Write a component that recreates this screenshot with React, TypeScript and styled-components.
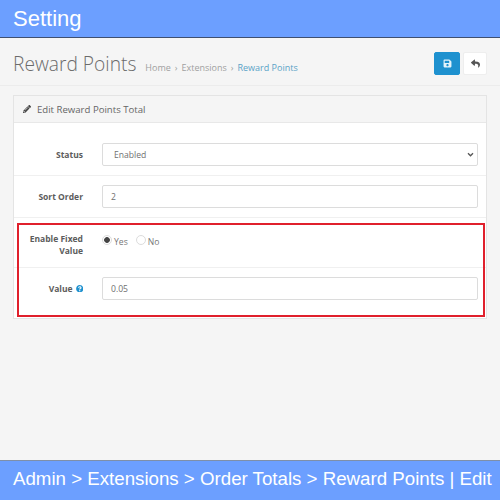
import styled, { createGlobalStyle } from "styled-components";
import { FaPencilAlt, FaQuestionCircle, FaReply, FaSave } from "react-icons/fa";

const GlobalStyle = createGlobalStyle`
  html, body {
    margin: 0;
    padding: 0;
    background: #f5f5f5;
  }
  * {
    box-sizing: border-box;
  }
`;

const Page = styled.div`
  width: 500px;
  height: 500px;
  display: flex;
  flex-direction: column;
  background: #f5f5f5;
  font-family: "Open Sans", "Liberation Sans", sans-serif;
  font-size: 10px;
  color: #666;
  overflow: hidden;
`;

const Banner = styled.div<{ $bottom?: boolean }>`
  background: #6c9fff;
  color: #fff;
  font-family: "Liberation Sans", Arial, sans-serif;
  display: flex;
  align-items: center;
  padding-left: 13px;
  padding-bottom: ${({ $bottom }) => ($bottom ? "3px" : "0")};
  white-space: nowrap;
  height: ${({ $bottom }) => ($bottom ? "40px" : "38px")};
  font-size: ${({ $bottom }) => ($bottom ? "18.7px" : "22px")};
  border-top: ${({ $bottom }) => ($bottom ? "1px solid #7f8fa8" : "0")};
  border-bottom: ${({ $bottom }) => ($bottom ? "0" : "1px solid #3f4f70")};
`;

const PageHeader = styled.header`
  height: 48px;
  flex-shrink: 0;
  border-bottom: 1px solid #ececec;
  display: flex;
  align-items: flex-start;
  justify-content: space-between;
  padding: 14px 13px 0;
`;

const TitleRow = styled.div`
  display: flex;
  align-items: baseline;
  gap: 9px;
`;

const Title = styled.h1`
  margin: 0;
  font-size: 19.2px;
  font-weight: 300;
  line-height: 24px;
  color: #6b6b6b;
`;

const Crumbs = styled.ol`
  display: flex;
  gap: 4px;
  list-style: none;
  margin: 0;
  padding: 0;
  font-size: 9px;
  color: #999;
`;

const Crumb = styled.li<{ $active?: boolean }>`
  color: ${({ $active }) => ($active ? "#5aa3c7" : "#a0a0a0")};
`;

const Actions = styled.div`
  display: flex;
  gap: 3px;
`;

const IconButton = styled.button<{ $primary?: boolean }>`
  height: 23px;
  width: ${({ $primary }) => ($primary ? "26px" : "24px")};
  padding: 0;
  display: flex;
  align-items: center;
  justify-content: center;
  border-radius: 2px;
  font-size: 9px;
  border: 1px solid ${({ $primary }) => ($primary ? "#1e91cf" : "#eeeeee")};
  background: ${({ $primary }) => ($primary ? "#1e91cf" : "#fff")};
  color: ${({ $primary }) => ($primary ? "#e4f3fb" : "#555")};
`;

const Panel = styled.section`
  margin: 9px 13px 0;
  border: 1px solid #e4e4e4;
  background: #fff;
`;

const PanelHeading = styled.div`
  height: 27px;
  display: flex;
  align-items: center;
  gap: 6px;
  padding-left: 9px;
  background: #f5f5f5;
  border-bottom: 1px solid #e8e8e8;
  font-size: 9.6px;
  color: #666;
`;

const PencilIcon = styled(FaPencilAlt)`
  font-size: 8px;
  color: #444;
`;

const PanelBody = styled.div`
  position: relative;
  padding-bottom: 9px;
`;

const Row = styled.div<{ $first?: boolean; $last?: boolean }>`
  display: grid;
  grid-template-columns: 69px 1fr;
  column-gap: 19px;
  padding: ${({ $first }) => ($first ? "20px" : "9px")} 8px 9px 0;
  border-bottom: ${({ $last }) => ($last ? "0" : "1px solid #f0f0f0")};
`;

const Label = styled.label`
  font-weight: 700;
  font-size: 8.5px;
  line-height: 12px;
  color: #5c5c5c;
  text-align: right;
  align-self: center;
  display: flex;
  justify-content: flex-end;
  align-items: center;
  gap: 3px;
`;

const TopLabel = styled(Label)`
  display: block;
  align-self: start;
  padding-top: 6px;
`;

const HelpIcon = styled(FaQuestionCircle)`
  font-size: 7.5px;
  color: #1e91cf;
`;

const Field = styled.div<{ $select?: boolean }>`
  height: 23px;
  display: flex;
  align-items: center;
  justify-content: space-between;
  padding: 0 8px 0 ${({ $select }) => ($select ? "11px" : "8px")};
  background: #fff;
  border: 1px solid #dcdcdc;
  border-radius: 2px;
  font-size: 8.6px;
  color: #707070;
`;

const Chevron = styled.svg`
  width: 7px;
  height: 5px;
  margin-right: -5px;
`;

const RadioGroup = styled.div`
  display: flex;
  align-items: center;
  gap: 8px;
  height: 31px;
  align-self: start;
  padding-bottom: 5px;
`;

const RadioOption = styled.span`
  display: flex;
  align-items: center;
  gap: 2px;
  font-size: 8.6px;
  color: #777;
  padding-top: 4px;
`;

const RadioDot = styled.span<{ $checked?: boolean }>`
  width: 10px;
  height: 10px;
  margin-top: -4px;
  border-radius: 50%;
  border: 1px solid #dcdcdc;
  background: ${({ $checked }) =>
    $checked ? "radial-gradient(circle, #444 0 2.5px, #fff 3.2px)" : "#fff"};
`;

const Highlight = styled.div`
  position: absolute;
  left: 3px;
  right: 1px;
  top: 100px;
  height: 94px;
  border: 2px solid #e0202c;
  pointer-events: none;
`;

const Spacer = styled.div`
  flex: 1;
`;

export default function App() {
  return (
    <Page>
      <GlobalStyle />
      <Banner>Setting</Banner>
      <PageHeader>
        <TitleRow>
          <Title>Reward Points</Title>
          <Crumbs>
            <Crumb>Home</Crumb>
            <Crumb>›</Crumb>
            <Crumb>Extensions</Crumb>
            <Crumb>›</Crumb>
            <Crumb $active>Reward Points</Crumb>
          </Crumbs>
        </TitleRow>
        <Actions>
          <IconButton $primary>
            <FaSave />
          </IconButton>
          <IconButton>
            <FaReply />
          </IconButton>
        </Actions>
      </PageHeader>
      <Panel>
        <PanelHeading>
          <PencilIcon />
          Edit Reward Points Total
        </PanelHeading>
        <PanelBody>
          <Row $first>
            <Label>Status</Label>
            <Field $select>
              Enabled
              <Chevron viewBox="0 0 8 6">
                <path d="M1 1.5 L4 4.5 L7 1.5" fill="none" stroke="#555" strokeWidth="1.6" />
              </Chevron>
            </Field>
          </Row>
          <Row>
            <Label>Sort Order</Label>
            <Field>2</Field>
          </Row>
          <Row>
            <TopLabel>Enable Fixed Value</TopLabel>
            <RadioGroup>
              <RadioOption>
                <RadioDot $checked />
                Yes
              </RadioOption>
              <RadioOption>
                <RadioDot />
                No
              </RadioOption>
            </RadioGroup>
          </Row>
          <Row $last>
            <Label>
              Value <HelpIcon />
            </Label>
            <Field>0.05</Field>
          </Row>
          <Highlight />
        </PanelBody>
      </Panel>
      <Spacer />
      <Banner $bottom>Admin &gt; Extensions &gt; Order Totals &gt; Reward Points | Edit</Banner>
    </Page>
  );
}
